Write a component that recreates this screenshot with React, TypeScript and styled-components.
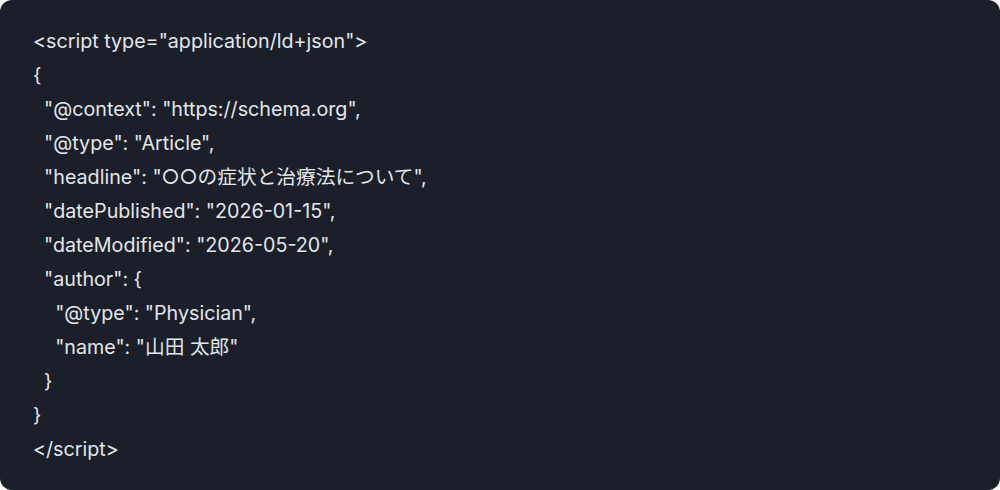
import React from "react";
import styled, { createGlobalStyle } from "styled-components";

const Global = createGlobalStyle`
  html, body { margin: 0; padding: 0; background: #ffffff; }
  #root { width: 1000px; height: 490px; }
`;

const CodeCard = styled.pre`
  box-sizing: border-box;
  margin: 0;
  width: 1000px;
  height: 490px;
  padding: 24px 33px;
  background: #1b1f29;
  border-radius: 12px;
  color: #e3e6eb;
  font-family: Inter, "Noto Sans CJK JP", sans-serif;
  font-size: 19.7px;
  font-weight: 400;
  line-height: 34px;
  white-space: pre;
  overflow: hidden;
`;

const code = `<script type="application/ld+json">
{
  "@context": "https://schema.org",
  "@type": "Article",
  "headline": "○○の症状と治療法について",
  "datePublished": "2026-01-15",
  "dateModified": "2026-05-20",
  "author": {
    "@type": "Physician",
    "name": "山田 太郎"
  }
}
</script>`;

export default function App() {
  return (
    <>
      <Global />
      <CodeCard>{code}</CodeCard>
    </>
  );
}
